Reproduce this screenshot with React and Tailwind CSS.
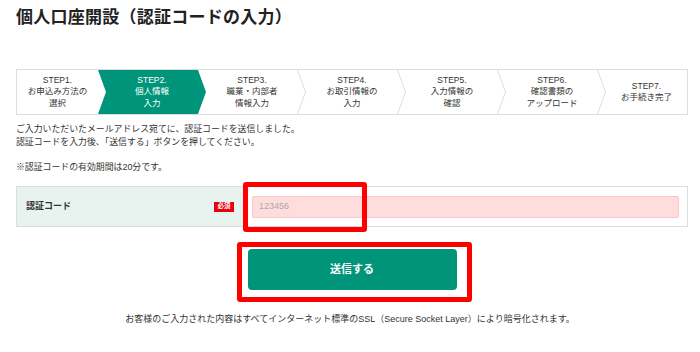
import React from "react";

const FONT = { fontFamily: '"Liberation Sans", "Noto Sans CJK JP", sans-serif' };

function Chevron() {
  return (
    <svg
      className="absolute top-0 right-[-8px] z-20 h-full w-[9px]"
      viewBox="0 0 9 44"
      preserveAspectRatio="none"
    >
      <polyline points="0.5,0 8.5,22 0.5,44" fill="none" stroke="#dcdcdc" strokeWidth="1" />
    </svg>
  );
}

const steps = [
  { w: "w-[81px]", lines: ["STEP1.", "お申込み方法の", "選択"], chevron: false },
  { w: "w-[100px]", lines: ["STEP2.", "個人情報", "入力"], active: true },
  { w: "w-[100px]", lines: ["STEP3.", "職業・内部者", "情報入力"], chevron: true },
  { w: "w-[100px]", lines: ["STEP4.", "お取引情報の", "入力"], chevron: true },
  { w: "w-[100px]", lines: ["STEP5.", "入力情報の", "確認"], chevron: true },
  { w: "w-[100px]", lines: ["STEP6.", "確認書類の", "アップロード"], chevron: true },
  { w: "flex-1", lines: ["STEP7.", "お手続き完了"] },
];

export default function App() {
  return (
    <div className="relative h-[352px] w-[700px] overflow-hidden bg-white text-[#333333]" style={FONT}>
      <div className="px-[16px] pt-[6px]">
        <h1 className="text-[17px] font-bold leading-[24px] tracking-[0.25px] text-[#222222]">
          個人口座開設（認証コードの入力）
        </h1>

        <div className="mt-[39px] flex h-[46px] w-[672px] border border-[#dddddd] bg-white">
          {steps.map((s, i) => (
            <div
              key={i}
              className={`relative flex h-full items-center justify-center text-center ${s.w} ${i > 0 ? "pl-[8px]" : ""}`}
            >
              {s.active && (
                <div className="absolute top-0 bottom-0 left-0 z-0 w-[108px] bg-[#00957a] [clip-path:polygon(0_0,100px_0,108px_50%,100px_100%,0_100%,8px_50%)]" />
              )}
              {s.chevron && <Chevron />}
              <div
                className={`relative z-10 text-[8.5px] leading-[11.5px] ${s.active ? "text-white" : "text-[#333333]"}`}
              >
                {s.lines.map((l, j) => (
                  <div key={j}>{l}</div>
                ))}
              </div>
            </div>
          ))}
        </div>

        <div className="mt-[8px] text-[8.9px] leading-[12.5px] text-[#333333]">
          <p>ご入力いただいたメールアドレス宛てに、認証コードを送信しました。</p>
          <p>認証コードを入力後、「送信する」ボタンを押してください。</p>
          <p className="h-[12.5px]"></p>
          <p>※認証コードの有効期間は20分です。</p>
        </div>

        <div className="mt-[13px] flex h-[41px] w-[672px] border border-[#dddddd]">
          <div className="flex w-[228px] items-center justify-between bg-[#e8f2ef] pr-[11px] pl-[9px]">
            <span className="text-[9px] font-bold text-[#333333]">認証コード</span>
            <span className="flex h-[10px] w-[20px] items-center justify-center bg-[#e60012] text-[6.5px] leading-none font-bold text-white">
              必須
            </span>
          </div>
          <div className="flex flex-1 items-center pr-[8px] pl-[7px]">
            <div className="flex h-[22px] w-full items-center rounded-[2px] border border-[#f3c9c9] bg-[#ffdddd] pl-[6px] text-[9px] text-[#aaaaaa]">
              123456
            </div>
          </div>
        </div>

        <div className="mt-[22px] flex w-[672px] justify-center">
          <div className="flex h-[41px] w-[209px] items-center justify-center rounded-[4px] bg-[#00957a] text-[11px] font-bold text-white">
            送信する
          </div>
        </div>

        <p className="mt-[23px] w-[668px] text-center text-[9px] leading-[12px] text-[#333333]">
          お客様のご入力された内容はすべてインターネット標準のSSL（Secure Socket Layer）により暗号化されます。
        </p>
      </div>

      <div className="absolute top-[182px] left-[243px] h-[50px] w-[124px] rounded-[3px] border-[5px] border-[#ff0000]" />
      <div className="absolute top-[242px] left-[237px] h-[60px] w-[235px] rounded-[3px] border-[5px] border-[#ff0000]" />
    </div>
  );
}
